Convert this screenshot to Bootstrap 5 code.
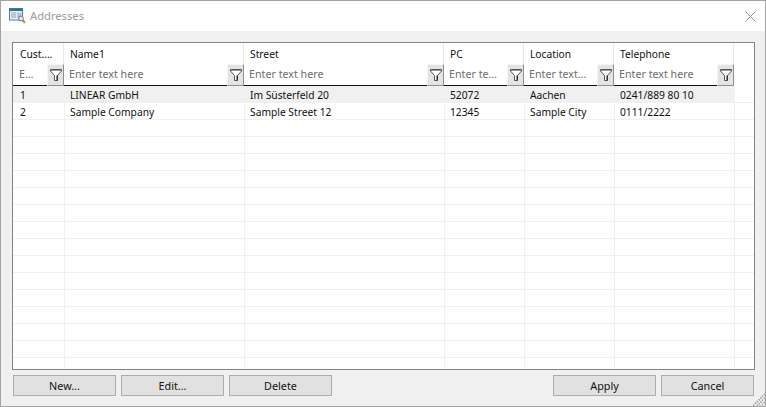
<!DOCTYPE html>
<html lang="en"><head><meta charset="utf-8">
<link href="https://cdn.jsdelivr.net/npm/bootstrap@5.3.0/dist/css/bootstrap.min.css" rel="stylesheet">
<style>
html,body{height:100%;margin:0;background:#f0f0f0}
body{font-family:"Noto Sans",sans-serif;font-size:10.25px;color:#111;overflow:hidden}
.win{width:766px;height:407px;border:1px solid #a3a3a3;background:#f0f0f0;position:relative}
.titlebar{height:30px;background:#fff;padding-left:8px;gap:4px}
.titlebar .t{font-size:11.2px;color:#9a9aa2}
.x{margin-left:auto;margin-right:9px}
.content{padding:11px 11px 0 11px}
.gridbox{height:328px;width:743px;border:1px solid #82828a;background:#fff;overflow:hidden}
table.g{table-layout:fixed;width:741px;border-collapse:separate;border-spacing:0;margin:0}
table.g td,table.g th{padding:0;font-weight:400;white-space:nowrap;overflow:hidden;text-overflow:ellipsis}
.hd th{height:21px;padding:2px 0 0 6px!important;border-right:1px solid #e8e8e8;vertical-align:middle}
.hd th:first-child{padding-left:7px!important}
.fl td{height:22px}
.fw{height:21px;padding-left:5px;color:#6d6d6d;font-size:10.7px;border-bottom:1px solid #111}
.fl td:first-child .fw{padding-left:6px}
.fw span{min-width:0;overflow:hidden;text-overflow:ellipsis;white-space:nowrap;flex:1}
.fb{width:17px;height:22px;flex:none;margin-bottom:-1px;background:#e4e4e4;border:1px solid;border-color:#f6f6f6 #8f8f8f #8f8f8f #f6f6f6}
.r td{height:17px;border-bottom:1px solid #f0f0f0;border-left:1px solid #f0f0f0;padding:3px 0 0 5px!important;line-height:13px}
.r td:first-child{border-left:0;padding-left:7px!important}
.r.sel td:not(.last){background:#f0f0f0;border-left-color:#f0f0f0}
.hd .last{border-right:0}
.btnbar{padding-top:5px;padding-left:1px;gap:5px}
.wb{height:21px;width:103px;border:1px solid #adadad;border-radius:0;background:#e1e1e1;color:#111;font-size:10.8px;padding:0;line-height:18px}
.wb:hover{background:#e1e1e1;border-color:#adadad}
.wb.c{width:93px}
.grip{position:absolute;right:0;bottom:0}
</style></head><body>
<div class="win">
 <div class="titlebar d-flex align-items-center">
  <svg width="17" height="18" viewBox="0 0 17 18"><rect x=".5" y="1.500" width="13" height="11.500" fill="#e6eef5" stroke="#5b7f9c"/><rect x=".5" y="1.500" width="13" height="2.500" fill="#2f6f98"/><path d="M2 6h5M2 8h5M2 10h5" stroke="#8ba0b2"/><rect x="8" y="5.500" width="4.500" height="5.500" fill="#a9c6df"/><circle cx="12" cy="11.500" r="2.400" fill="#dfeaf3" stroke="#777"/><path d="M13.800 13.500l2.200 2.200" stroke="#b98a2c" stroke-width="2"/></svg>
  <span class="t">Addresses</span>
  <svg class="x" width="11" height="11" viewBox="0 0 11 11"><path d="M.5.500l10 10M10.500.500l-10 10" stroke="#8f8f8f" fill="none"/></svg>
 </div>
 <div class="content">
  <div class="gridbox">
   <table class="g">
    <colgroup><col style="width:51px"><col style="width:180px"><col style="width:200px"><col style="width:80px"><col style="width:90px"><col style="width:120px"><col></colgroup>
    <thead>
    <tr class="hd"><th>Cust.…</th><th>Name1</th><th>Street</th><th>PC</th><th>Location</th><th>Telephone</th><th class="last"></th></tr>
    <tr class="fl">
     <td><div class="d-flex align-items-center fw"><span>E…</span><div class="fb d-flex align-items-center justify-content-center"><svg width="12" height="12" viewBox="0 0 12 12"><path d="M.5.500h11v1.500L7.500 6.500v5h-3v-5L.5 2z" fill="#fff" stroke="#555"/><path d="M1 1h10v1H1z" fill="#999"/><path d="M7 6.500v5" stroke="#111"/></svg></div></div></td>
     <td><div class="d-flex align-items-center fw"><span>Enter text here</span><div class="fb d-flex align-items-center justify-content-center"><svg width="12" height="12" viewBox="0 0 12 12"><path d="M.5.500h11v1.500L7.500 6.500v5h-3v-5L.5 2z" fill="#fff" stroke="#555"/><path d="M1 1h10v1H1z" fill="#999"/><path d="M7 6.500v5" stroke="#111"/></svg></div></div></td>
     <td><div class="d-flex align-items-center fw"><span>Enter text here</span><div class="fb d-flex align-items-center justify-content-center"><svg width="12" height="12" viewBox="0 0 12 12"><path d="M.5.500h11v1.500L7.500 6.500v5h-3v-5L.5 2z" fill="#fff" stroke="#555"/><path d="M1 1h10v1H1z" fill="#999"/><path d="M7 6.500v5" stroke="#111"/></svg></div></div></td>
     <td><div class="d-flex align-items-center fw"><span>Enter te…</span><div class="fb d-flex align-items-center justify-content-center"><svg width="12" height="12" viewBox="0 0 12 12"><path d="M.5.500h11v1.500L7.500 6.500v5h-3v-5L.5 2z" fill="#fff" stroke="#555"/><path d="M1 1h10v1H1z" fill="#999"/><path d="M7 6.500v5" stroke="#111"/></svg></div></div></td>
     <td><div class="d-flex align-items-center fw"><span>Enter text…</span><div class="fb d-flex align-items-center justify-content-center"><svg width="12" height="12" viewBox="0 0 12 12"><path d="M.5.500h11v1.500L7.500 6.500v5h-3v-5L.5 2z" fill="#fff" stroke="#555"/><path d="M1 1h10v1H1z" fill="#999"/><path d="M7 6.500v5" stroke="#111"/></svg></div></div></td>
     <td><div class="d-flex align-items-center fw"><span>Enter text here</span><div class="fb d-flex align-items-center justify-content-center"><svg width="12" height="12" viewBox="0 0 12 12"><path d="M.5.500h11v1.500L7.500 6.500v5h-3v-5L.5 2z" fill="#fff" stroke="#555"/><path d="M1 1h10v1H1z" fill="#999"/><path d="M7 6.500v5" stroke="#111"/></svg></div></div></td>
     <td class="last"></td>
    </tr>
    </thead>
    <tbody>
    <tr class="r sel"><td>1</td><td>LINEAR GmbH</td><td>Im Süsterfeld 20</td><td>52072</td><td>Aachen</td><td>0241/889 80 10</td><td class="last"></td></tr>
    <tr class="r"><td>2</td><td>Sample Company</td><td>Sample Street 12</td><td>12345</td><td>Sample City</td><td>0111/2222</td><td class="last"></td></tr>
    <tr class="r"><td></td><td></td><td></td><td></td><td></td><td></td><td class="last"></td></tr>
    <tr class="r"><td></td><td></td><td></td><td></td><td></td><td></td><td class="last"></td></tr>
    <tr class="r"><td></td><td></td><td></td><td></td><td></td><td></td><td class="last"></td></tr>
    <tr class="r"><td></td><td></td><td></td><td></td><td></td><td></td><td class="last"></td></tr>
    <tr class="r"><td></td><td></td><td></td><td></td><td></td><td></td><td class="last"></td></tr>
    <tr class="r"><td></td><td></td><td></td><td></td><td></td><td></td><td class="last"></td></tr>
    <tr class="r"><td></td><td></td><td></td><td></td><td></td><td></td><td class="last"></td></tr>
    <tr class="r"><td></td><td></td><td></td><td></td><td></td><td></td><td class="last"></td></tr>
    <tr class="r"><td></td><td></td><td></td><td></td><td></td><td></td><td class="last"></td></tr>
    <tr class="r"><td></td><td></td><td></td><td></td><td></td><td></td><td class="last"></td></tr>
    <tr class="r"><td></td><td></td><td></td><td></td><td></td><td></td><td class="last"></td></tr>
    <tr class="r"><td></td><td></td><td></td><td></td><td></td><td></td><td class="last"></td></tr>
    <tr class="r"><td></td><td></td><td></td><td></td><td></td><td></td><td class="last"></td></tr>
    <tr class="r"><td></td><td></td><td></td><td></td><td></td><td></td><td class="last"></td></tr>
    <tr class="r"><td></td><td></td><td></td><td></td><td></td><td></td><td class="last"></td></tr>
    </tbody>
   </table>
  </div>
  <div class="d-flex btnbar">
   <button class="btn wb">New...</button><button class="btn wb">Edit...</button><button class="btn wb">Delete</button>
   <button class="btn wb ms-auto">Apply</button><button class="btn wb c">Cancel</button>
  </div>
 </div>
 <svg class="grip" width="13" height="13" viewBox="0 0 13 13"><path d="M13 1L1 13M13 5l-8 8M13 9l-4 4" stroke="#9a9a9a" stroke-width="1.500" stroke-dasharray="1.500 1" fill="none"/></svg>
</div>
<script src="https://cdn.jsdelivr.net/npm/bootstrap@5.3.0/dist/js/bootstrap.bundle.min.js"></script>
</body></html>
